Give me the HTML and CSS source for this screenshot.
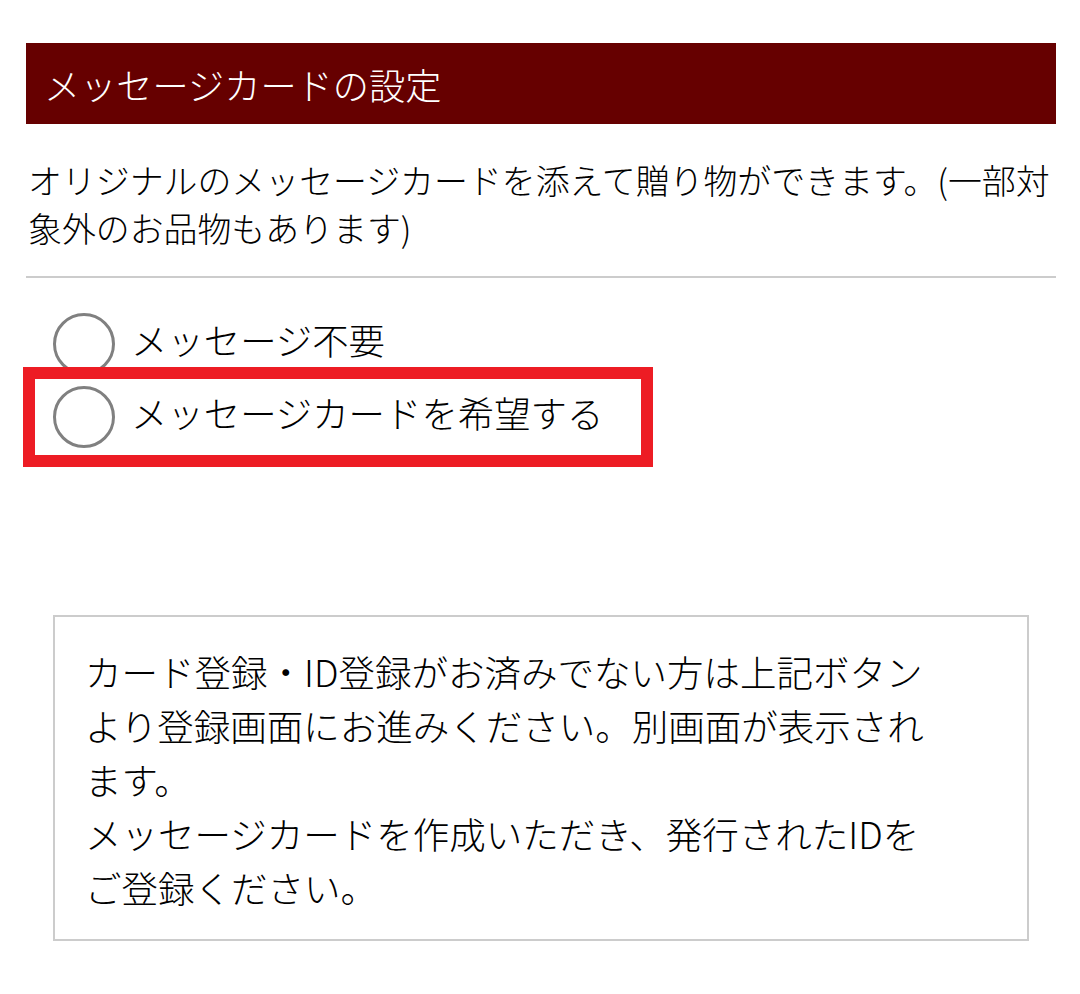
FILE: index.html
```html
<!DOCTYPE html>
<html lang="ja">
<head>
<meta charset="utf-8">
<title>メッセージカードの設定</title>
<link rel="stylesheet" href="styles.css">
</head>
<body>
<div class="page">
  <h2 class="section-title">メッセージカードの設定</h2>
  <p class="lead">オリジナルのメッセージカードを添えて贈り物ができます。(一部対象外のお品物もあります)</p>
  <div class="options">
    <label class="option">
      <input type="radio" name="msg" class="radio-input">
      <span class="radio"></span>
      <span class="option-text">メッセージ不要</span>
    </label>
    <label class="option option-marked">
      <input type="radio" name="msg" class="radio-input">
      <span class="radio"></span>
      <span class="option-text">メッセージカードを希望する</span>
      <span class="highlight"></span>
    </label>
  </div>
  <div class="info">
    <p class="info-text">カード登録・ID登録がお済みでない方は上記ボタンより登録画面にお進みください。別画面が表示されます。<br>メッセージカードを作成いただき、発行されたIDをご登録ください。</p>
  </div>
</div>
</body>
</html>
```

FILE: styles.css
```css
html, body {
  margin: 0;
  padding: 0;
  background: #ffffff;
}

body {
  font-family: "Noto Sans CJK JP", "Noto Sans", sans-serif;
  font-weight: 300;
  color: #000000;
}

.page {
  padding: 43px 24px 0 26px;
}

.section-title {
  margin: 0;
  height: 81px;
  box-sizing: border-box;
  padding: 2px 0 0 18px;
  background: #660000;
  color: #ffffff;
  font-size: 36.2px;
  font-weight: 300;
  line-height: 79px;
}

.lead {
  margin: 32px 0 0;
  padding: 0 0 24px 2px;
  font-size: 33.9px;
  line-height: 48px;
  border-bottom: 2px solid #cccccc;
}

.options {
  padding-top: 29px;
}

.option {
  position: relative;
  display: flex;
  align-items: center;
  height: 73px;
  padding-left: 27px;
  cursor: pointer;
}

.radio-input {
  position: absolute;
  opacity: 0;
  width: 0;
  height: 0;
  margin: 0;
}

.radio {
  flex: none;
  width: 62px;
  height: 62px;
  box-sizing: border-box;
  border: 3px solid #808080;
  border-radius: 50%;
  background: #ffffff;
}

.option-text {
  margin-left: 16px;
  font-size: 36.4px;
  line-height: 48px;
  padding-bottom: 10px;
}

.highlight {
  position: absolute;
  left: -3px;
  top: -13px;
  width: 630px;
  height: 100px;
  box-sizing: border-box;
  border: 12px solid #ed1c24;
  pointer-events: none;
}

.info {
  margin: 162px 27px 0 27px;
  height: 326px;
  box-sizing: border-box;
  border: 2px solid #cccccc;
  padding: 28px 82px 0 30px;
}

.info-text {
  margin: 0;
  font-size: 36.5px;
  line-height: 54px;
}
```
